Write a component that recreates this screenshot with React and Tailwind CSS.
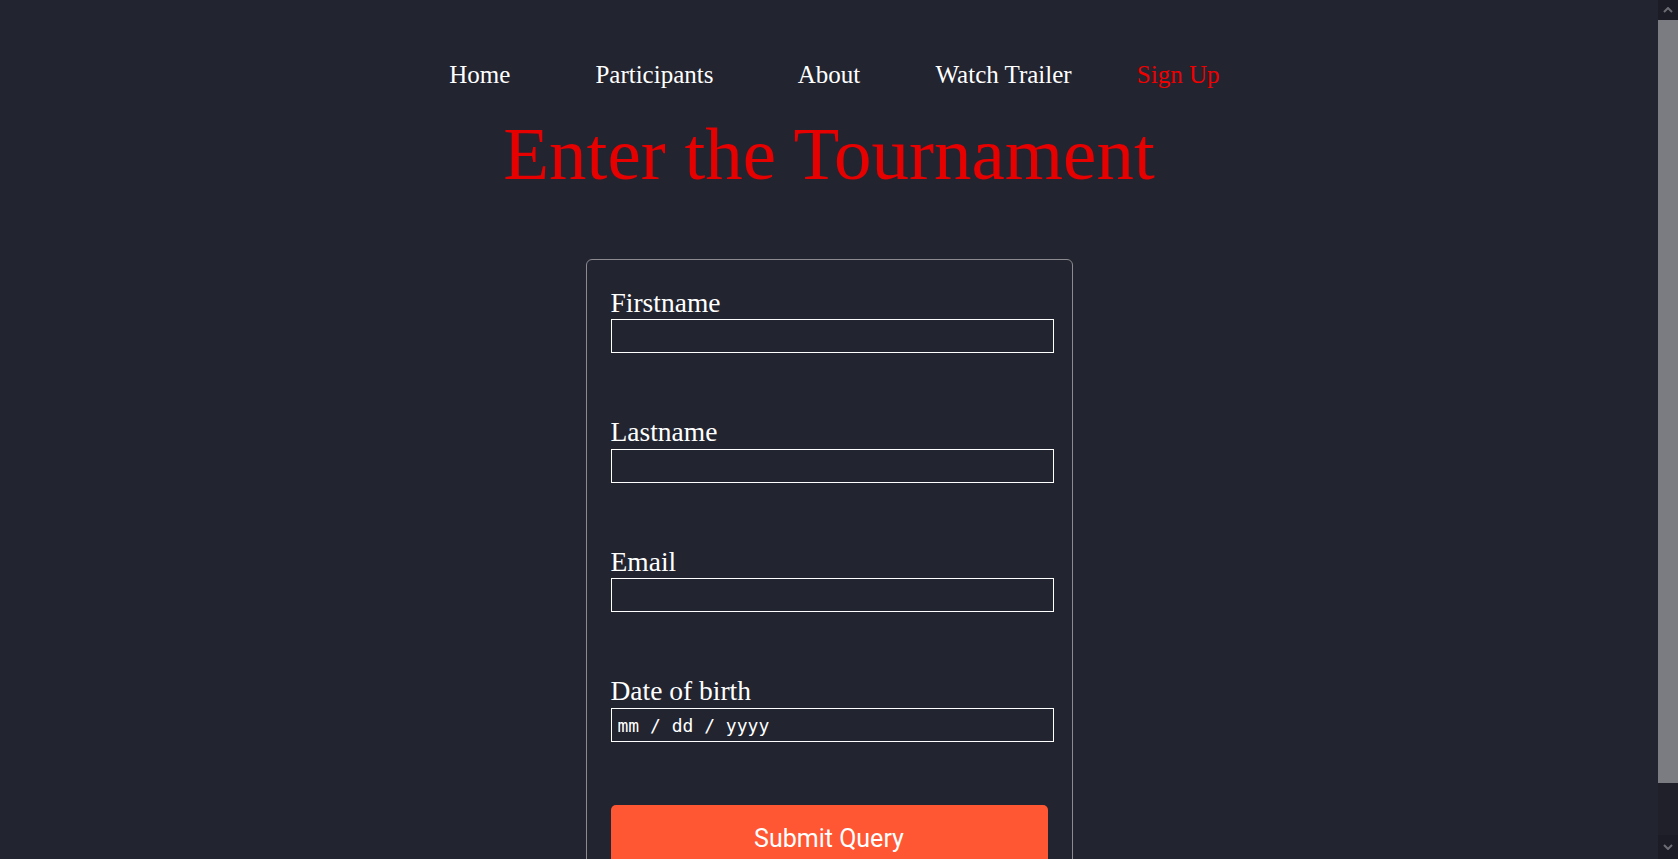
import React from "react";

const navItems = [
  { label: "Home", active: false },
  { label: "Participants", active: false },
  { label: "About", active: false },
  { label: "Watch Trailer", active: false },
  { label: "Sign Up", active: true },
];

function Field({ label, type = "text", placeholder, first }) {
  return (
    <div className={first ? "flex flex-col" : "flex flex-col mt-[63px]"}>
      <label className="block text-[27.5px] leading-[31.6px] text-white">{label}</label>
      <input
        type={type}
        placeholder={placeholder}
        className="mt-[1px] box-border h-[34px] w-[calc(100%+6px)] border border-white bg-transparent px-[6px] text-white outline-none placeholder:text-white font-['DejaVu_Sans_Mono',monospace] text-[18px]"
      />
    </div>
  );
}

function Scrollbar() {
  return (
    <div className="flex h-screen w-[20px] shrink-0 flex-col bg-[#1f202a]">
      <div className="flex h-[20px] items-center justify-center bg-[#1b1c25]">
        <svg width="10" height="6" viewBox="0 0 10 6">
          <path d="M1 5 L5 1 L9 5" stroke="#6c6d74" strokeWidth="2" fill="none" />
        </svg>
      </div>
      <div className="h-[763px] bg-[#7b7c81]" />
      <div className="flex-1" />
      <div className="flex h-[24px] items-center justify-center bg-[#1b1c25]">
        <svg width="10" height="6" viewBox="0 0 10 6">
          <path d="M1 1 L5 5 L9 1" stroke="#6c6d74" strokeWidth="2" fill="none" />
        </svg>
      </div>
    </div>
  );
}

export default function App() {
  return (
    <div className="flex h-screen w-full overflow-hidden bg-[#222430] font-['Liberation_Serif','Times_New_Roman',serif]">
      <main className="h-screen flex-1 overflow-hidden">
        <div className="flex flex-col items-center pt-[61px] pb-[23px]">
          <nav className="grid w-[873px] grid-cols-5 text-center text-[25px] leading-[28.7px]">
            {navItems.map((item) => (
              <a
                key={item.label}
                href="#"
                className={item.active ? "text-[#f00000]" : "text-white"}
              >
                {item.label}
              </a>
            ))}
          </nav>
          <h1 className="mt-[21px] text-[75px] leading-[86px] font-normal text-[#e60000]">
            Enter the Tournament
          </h1>
          <form className="mt-[62px] box-border w-[487px] rounded-[6px] border border-[#8a8a8f] px-[24px] pt-[27px] pb-[24px]">
            <Field label="Firstname" first />
            <Field label="Lastname" />
            <Field label="Email" type="email" />
            <Field label="Date of birth" placeholder="mm / dd / yyyy" />
            <button
              type="submit"
              className="mt-[63px] flex h-[68px] w-full items-center justify-center rounded-[5px] bg-[#ff5733] text-[25px] text-white font-['Roboto','Open_Sans',sans-serif]"
            >
              Submit Query
            </button>
          </form>
        </div>
      </main>
      <Scrollbar />
    </div>
  );
}
